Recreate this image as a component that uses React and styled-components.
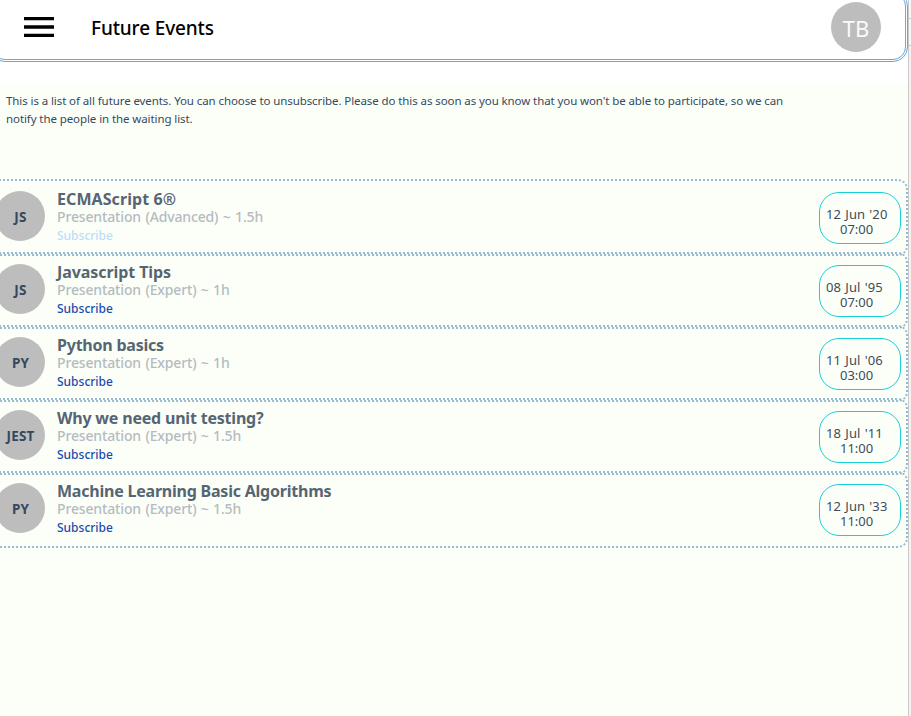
import React from "react";
import styled, { createGlobalStyle } from "styled-components";

const GlobalStyle = createGlobalStyle`
  * { box-sizing: border-box; }
  body { margin: 0; overflow: hidden; background: #fff; font-family: "Noto Sans", "Open Sans", sans-serif; }
`;

const Screen = styled.div`
  display: flex;
  width: 911px;
  height: 716px;
  overflow: hidden;
`;

const Page = styled.main`
  width: 908px;
  height: 716px;
  overflow: hidden;
  background: #fcfff8;
`;

const HeaderArea = styled.div`
  height: 83px;
  background: #fff;
  display: flow-root;
`;

const Header = styled.header`
  display: flex;
  align-items: flex-start;
  width: 918px;
  height: 71px;
  margin: -9px 0 0 -10px;
  padding: 8px 24px 0 31px;
  border: 3px double #6fa5ce;
  border-radius: 15px;
`;

const MenuIcon = styled.svg`
  display: block;
  width: 30px;
  height: 20px;
  margin-top: 15px;
`;

const Title = styled.h1`
  flex: 1;
  margin: 12px 0 0 37px;
  font-size: 19px;
  line-height: 28px;
  font-weight: 500;
  letter-spacing: -0.13px;
  color: #000;
`;

const Avatar = styled.div`
  flex: none;
  display: flex;
  align-items: center;
  justify-content: center;
  width: 50px;
  height: 50px;
  border-radius: 50%;
  background: #bdbdbd;
  color: #34495e;
  font-size: 13.5px;
  font-weight: 700;
  letter-spacing: 0.2px;
  padding: 1px 0 0 1px;
`;

const UserAvatar = styled(Avatar)`
  color: #fafafa;
  font-size: 22px;
  font-weight: 400;
  letter-spacing: 0;
  padding: 2px 0 0;
`;

const Intro = styled.p`
  height: 96px;
  margin: 0;
  padding: 9px 0 0 6px;
  font-size: 11.5px;
  line-height: 18px;
  letter-spacing: -0.09px;
  color: #34495e;
  white-space: nowrap;
`;

const Line = styled.span`
  display: block;
`;

const List = styled.div`
  display: flex;
  flex-direction: column;
`;

const Event = styled.article`
  flex: none;
  display: flex;
  width: 923px;
  height: 77px;
  margin: 0 0 -4px -15px;
  padding: 10px 5px 0 8px;
  border: 2px dotted #92bad2;
  border-radius: 10px;
`;

const Details = styled.div`
  flex: 1;
  padding-left: 12px;
  white-space: nowrap;
`;

const EventName = styled.h2`
  margin: -3px 0 0;
  font-size: 16px;
  line-height: 22px;
  font-weight: 700;
  letter-spacing: ${(p) => p.$spacing}px;
  color: #566573;
`;

const Kind = styled.div`
  margin-top: -2px;
  font-size: 14px;
  line-height: 18px;
  font-weight: 500;
  letter-spacing: -0.14px;
  word-spacing: 0.9px;
  color: #b4bbc1;
`;

const Subscribe = styled.div`
  margin-top: 1px;
  font-size: 12px;
  line-height: 18px;
  font-weight: 500;
  color: ${(p) => (p.$disabled ? "#bbdefb" : "#1a4bb0")};
`;

const DateBox = styled.div`
  flex: none;
  width: 82px;
  height: 52px;
  margin-top: 1px;
  padding: 14px 0 0 6px;
  border: 1px solid #17cfd8;
  border-radius: 20px;
  font-size: 13px;
  line-height: 15px;
  color: #3d4c5b;
  white-space: nowrap;
`;

const Day = styled.div`
  letter-spacing: 0.1px;
  word-spacing: 0.7px;
`;

const Time = styled.div`
  padding-left: 14px;
`;

const Edge = styled.aside`
  width: 3px;
  border-left: 1px solid #c9c9cd;
  background: #fdefed;
`;

const EdgeTop = styled.div`
  height: ${(p) => p.$height}px;
  background: #f7f7f7;
  border-bottom: 1px solid #cdcdcd;
`;

const events = [
  { tag: "JS", name: "ECMAScript 6®", spacing: 0.08, kind: "Presentation (Advanced) ~ 1.5h", day: "12 Jun '20", time: "07:00", disabled: true },
  { tag: "JS", name: "Javascript Tips", spacing: -0.08, kind: "Presentation (Expert) ~ 1h", day: "08 Jul '95", time: "07:00" },
  { tag: "PY", name: "Python basics", spacing: -0.22, kind: "Presentation (Expert) ~ 1h", day: "11 Jul '06", time: "03:00" },
  { tag: "JEST", name: "Why we need unit testing?", spacing: -0.2, kind: "Presentation (Expert) ~ 1.5h", day: "18 Jul '11", time: "11:00" },
  { tag: "PY", name: "Machine Learning Basic Algorithms", spacing: -0.22, kind: "Presentation (Expert) ~ 1.5h", day: "12 Jun '33", time: "11:00" },
];

export default function App() {
  return (
    <>
      <GlobalStyle />
      <Screen>
        <Page>
          <HeaderArea>
            <Header>
              <MenuIcon viewBox="0 0 30 20">
                <path d="M0 0h30v3.2H0zM0 8.2h30v3.6H0zM0 16.8h30v3.2H0z" fill="#000" />
              </MenuIcon>
              <Title>Future Events</Title>
              <UserAvatar>TB</UserAvatar>
            </Header>
          </HeaderArea>
          <Intro>
            <Line>This is a list of all future events. You can choose to unsubscribe. Please do this as soon as you know that you won't be able to participate, so we can</Line>
            <Line>notify the people in the waiting list.</Line>
          </Intro>
          <List>
            {events.map((e) => (
              <Event key={e.name}>
                <Avatar>{e.tag}</Avatar>
                <Details>
                  <EventName $spacing={e.spacing}>{e.name}</EventName>
                  <Kind>{e.kind}</Kind>
                  <Subscribe $disabled={e.disabled}>Subscribe</Subscribe>
                </Details>
                <DateBox>
                  <Day>{e.day}</Day>
                  <Time>{e.time}</Time>
                </DateBox>
              </Event>
            ))}
          </List>
        </Page>
        <Edge>
          <EdgeTop $height={19} />
          <EdgeTop $height={27} />
        </Edge>
      </Screen>
    </>
  );
}
